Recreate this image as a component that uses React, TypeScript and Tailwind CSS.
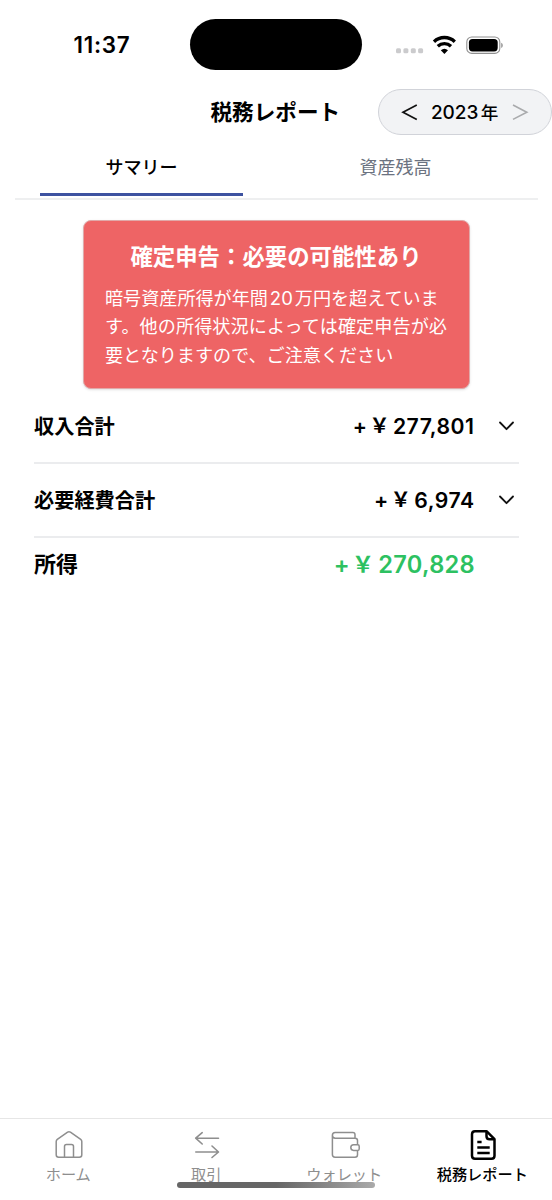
import React from "react";

function StatusBar() {
  return (
    <div className="flex h-20 shrink-0 items-start pt-[19px]">
      <div className="flex h-[51px] w-[190px] items-center pt-[2px] pl-[73.5px] text-[22.4px] font-semibold leading-none tracking-[0.75px]">
        11:37
      </div>
      <div className="h-[50.5px] w-[172px] rounded-full bg-black" />
      <div className="flex h-[51px] flex-1 items-center pl-[33px]">
        <svg width="112" height="24" viewBox="0 0 112 24" fill="none">
          <g fill="#cbcbcd">
            <rect x="1" y="15.2" width="5" height="5" rx="1.5" />
            <rect x="8.4" y="15.2" width="5" height="5" rx="1.5" />
            <rect x="15.8" y="15.2" width="5" height="5" rx="1.5" />
            <rect x="23.1" y="15.2" width="5" height="5" rx="1.5" />
          </g>
          <g stroke="#000" strokeWidth="3.3">
            <path d="M39 8.7a15 15 0 0 1 20.8 0" />
            <path d="M42.8 13.3a9.6 9.6 0 0 1 13.2 0" />
          </g>
          <path d="M45.8 17.3a5.5 5.5 0 0 1 7.2 0L49.4 21z" fill="#000" />
          <rect x="71.8" y="4" width="33" height="16.4" rx="5" stroke="#909090" strokeWidth="1.1" />
          <rect x="73.9" y="6" width="28.8" height="12.4" rx="3.6" fill="#000" />
          <path d="M106.4 9.8v5.2c1.6-.8 1.6-4.4 0-5.2z" fill="#777" />
        </svg>
      </div>
    </div>
  );
}

function Header() {
  return (
    <header className="flex h-[62px] shrink-0 items-start pt-[9px]">
      <h1 className="flex h-[46px] w-[378px] items-center pt-[2px] pl-[210.5px] text-[21.6px] font-bold leading-none whitespace-nowrap">
        税務レポート
      </h1>
      <div className="flex h-[46px] w-[174px] items-center rounded-full border border-[#d1d3d9] bg-[#f2f3f5]">
        <svg className="ml-[21.5px] shrink-0" width="18" height="18" viewBox="0 0 18 18" fill="none" stroke="#111" strokeWidth="1.7">
          <path d="M15.8 2 2 9.2l13.8 7.2" />
        </svg>
        <span className="ml-[12.5px] w-[67px] pt-[1px] text-[19px] font-medium leading-none tracking-[-0.1px] whitespace-nowrap">
          2023<span className="ml-[2.5px] text-[17.6px]">年</span>
        </span>
        <svg className="ml-[13px] shrink-0" width="18" height="18" viewBox="0 0 18 18" fill="none" stroke="#a9aaac" strokeWidth="1.6">
          <path d="M2 2l13.8 7.2L2 16.4" />
        </svg>
      </div>
    </header>
  );
}

function Tabs() {
  return (
    <div className="mr-[14px] ml-[15px] flex h-[58px] shrink-0 border-b-2 border-[#eeeff0] pl-[25px] leading-none">
      <button className="flex h-[54px] w-[203px] items-center justify-center border-b-[3px] border-[#3d52a0] text-[18px] font-medium">
        サマリー
      </button>
      <button className="ml-[51px] flex h-[51px] w-[203px] items-center justify-center text-[18px] text-[#6b7280]">
        資産残高
      </button>
    </div>
  );
}

function Notice() {
  return (
    <section className="mr-[82px] ml-[83px] mt-[19.5px] h-[169.5px] shrink-0 rounded-[8px] border border-[#e1a9a9] bg-[#ee6465] px-[21px] pt-[22.5px] text-white shadow-sm">
      <h2 className="mr-[1px] text-center text-[22.4px] font-bold leading-[28px] whitespace-nowrap">
        確定申告：必要の可能性あり
      </h2>
      <p className="mt-[12.5px] text-[18.1px] leading-[28.8px] whitespace-nowrap">
        暗号資産所得が年間<span className="mx-[2px] text-[18.5px]">20</span>万円を超えていま
        <br />
        <span className="tracking-[0.1px]">す。他の所得状況によっては確定申告が必</span>
        <br />
        要となりますので、ご注意ください
      </p>
    </section>
  );
}

function Row({ label, amount }: { label: string; amount: string }) {
  return (
    <div className="flex h-[74px] items-center border-b-2 border-[#ebecee] pb-[2px] text-[20.2px] font-bold leading-none first:h-[75px] first:pb-0">
      <span className="pt-[4px]">{label}</span>
      <span className="ml-auto pt-[3px] text-[21.2px] font-semibold tracking-[0.5px]">
        +<span className="mr-[3px] ml-[2px] align-[1px] text-[20px]">￥</span>
        {amount}
      </span>
      <svg className="mt-[1px] mr-[4px] ml-[23.5px]" width="17" height="12" viewBox="0 0 17 12" fill="none" stroke="#111" strokeWidth="1.8" strokeLinecap="round" strokeLinejoin="round">
        <path d="M2 2.5l6.5 6.7L15 2.5" />
      </svg>
    </div>
  );
}

const HomeIcon = (
  <svg width="30" height="32" viewBox="0 0 30 32" fill="none" stroke="currentColor" strokeWidth="1.5" strokeLinejoin="round">
    <path d="M2.2 12.5q0-1.3 1.1-2.1L13.6 3.2q1.4-1 2.8 0l10.3 7.2q1.1.8 1.1 2.1v13.2q0 2.5-2.5 2.5H4.7q-2.5 0-2.5-2.5z" />
    <path d="M10.5 28V17.6q0-2 2-2h5q2 0 2 2V28" />
  </svg>
);

const TradeIcon = (
  <svg width="30" height="32" viewBox="0 0 30 32" fill="none" stroke="currentColor" strokeWidth="1.6" strokeLinecap="round" strokeLinejoin="round">
    <path d="M26.5 9.2H4M10.2 3.7 3.7 9.2l6.5 5.8M3.8 23H26M20 17l6.5 6-6.5 5.5" />
  </svg>
);

const WalletIcon = (
  <svg width="30" height="32" viewBox="0 0 30 32" fill="none" stroke="currentColor" strokeWidth="1.5" strokeLinejoin="round">
    <path d="M25 9.2V5.7q0-2.2-2.2-2.2H5.2q-2.8 0-2.8 2.8t2.8 2.9h20q2.3 0 2.3 2.3v4.3M2.4 6.3v19.2q0 2.7 2.7 2.7h19.9q2.5 0 2.5-2.5v-4.3" />
    <path d="M27.8 15.8h-4.2a2.8 2.8 0 0 0 0 5.6h4.2q1.4 0 1.4-1.4v-2.8q0-1.4-1.4-1.4z" />
  </svg>
);

const ReportIcon = (
  <svg width="30" height="32" viewBox="0 0 30 32" fill="none" stroke="currentColor" strokeWidth="2.5" strokeLinejoin="round">
    <path d="M18.5 2.2H7q-3 0-3 3v21.6q0 3 3 3h16.5q3 0 3-3V10.2z" />
    <path d="M18.5 2.2v5q0 3 3 3h5" />
    <path d="M9.3 13h4.3M9.3 18.5h12.4M9.3 24h12.4" />
  </svg>
);

const navItems = [
  { label: "ホーム", icon: HomeIcon, active: false },
  { label: "取引", icon: TradeIcon, active: false },
  { label: "ウォレット", icon: WalletIcon, active: false },
  { label: "税務レポート", icon: ReportIcon, active: true },
];

function BottomNav() {
  return (
    <nav className="relative mt-auto flex h-[82.5px] shrink-0 border-t-[1.5px] border-[#e6e6e6]">
      {navItems.map((item) => (
        <div
          key={item.label}
          className={
            item.active
              ? "flex flex-1 flex-col items-center pt-[10px] font-medium text-black"
              : "flex flex-1 flex-col items-center pt-[10px] text-[#8e8e8e]"
          }
        >
          {item.icon}
          <span className="mt-[6px] mr-[1.5px] text-[15.2px] leading-[16px] whitespace-nowrap">{item.label}</span>
        </div>
      ))}
      <div className="absolute top-[63px] left-[177px] h-[6.5px] w-[198px] rounded-full bg-linear-to-r from-[#666] from-50% to-[#aaa]" />
    </nav>
  );
}

export default function App() {
  return (
    <div className="flex h-[1200px] w-[552px] flex-col overflow-hidden bg-white font-['Inter','Noto_Sans_CJK_JP',sans-serif] text-black">
      <StatusBar />
      <Header />
      <Tabs />
      <Notice />
      <main className="mr-[33px] ml-[34px] flex flex-col">
        <Row label="収入合計" amount="277,801" />
        <Row label="必要経費合計" amount="6,974" />
        <div className="flex h-[50px] items-center pr-[44px] text-[22px] font-bold leading-none">
          <span className="pt-[1px]">所得</span>
          <span className="ml-auto pt-[3px] text-[23.6px] font-semibold tracking-[0.3px] text-[#2dc161]">
            +<span className="mr-[4px] ml-[2px] align-[1px] text-[22px]">￥</span>270,828
          </span>
        </div>
      </main>
      <BottomNav />
    </div>
  );
}
